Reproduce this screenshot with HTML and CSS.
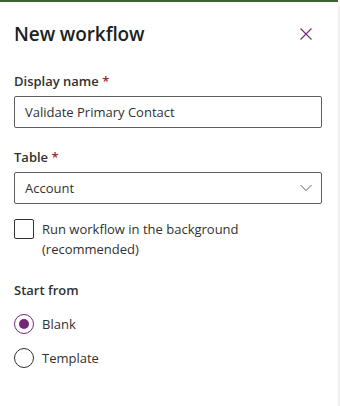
FILE: index.html
```html
<!DOCTYPE html>
<html>
<head>
<meta charset="utf-8">
<link rel="stylesheet" href="styles.css">
</head>
<body>
<div class="topbar"></div>
<div class="layout">
  <div class="panel">
    <div class="header">
      <h1 class="title">New workflow</h1>
      <button class="close" aria-label="Close">
        <svg width="12" height="12" viewBox="0 0 12 12"><path d="M0.5 0.5 L11.5 11.5 M11.5 0.5 L0.5 11.5" stroke="#742774" stroke-width="1.1" fill="none"/></svg>
      </button>
    </div>
    <div class="field">
      <label class="label">Display name <span class="req">*</span></label>
      <div class="input">Validate Primary Contact</div>
    </div>
    <div class="field">
      <label class="label">Table <span class="req">*</span></label>
      <div class="input select">
        <span>Account</span>
        <svg width="12" height="8" viewBox="0 0 12 8"><path d="M0.5 1 L6 6.5 L11.5 1" stroke="#605e5c" stroke-width="1" fill="none"/></svg>
      </div>
    </div>
    <div class="check">
      <span class="box"></span>
      <span class="check-text">Run workflow in the background (recommended)</span>
    </div>
    <div class="group">
      <div class="label">Start from</div>
      <div class="radio"><span class="circle on"></span><span>Blank</span></div>
      <div class="radio"><span class="circle"></span><span>Template</span></div>
    </div>
  </div>
  <div class="rail"></div>
</div>
</body>
</html>
```
FILE: styles.css
```css
html, body {
  margin: 0;
  padding: 0;
  background: #fff;
  font-family: "Open Sans", "Noto Sans", sans-serif;
  color: #323130;
}
.topbar {
  height: 2px;
  width: 338px;
  background: #3b6431;
}
.layout {
  display: flex;
  height: 404px;
}
.panel {
  width: 308px;
  padding: 0 16px 0 14px;
}
.rail {
  width: 2px;
  margin-top: 4px;
  background: #efefef;
}
.header {
  display: flex;
  align-items: center;
  justify-content: space-between;
  height: 64px;
}
.title {
  margin: 0;
  font-size: 19px;
  font-weight: 600;
  letter-spacing: -0.1px;
  color: #201f1e;
}
.close {
  border: 0;
  background: none;
  padding: 0;
  margin-right: 10px;
  width: 12px;
  height: 12px;
  display: flex;
}
.field {
  margin-bottom: 14px;
}
.label {
  display: block;
  font-size: 13px;
  font-weight: 600;
  line-height: 20px;
  padding: 5px 0 5px;
  color: #323130;
}
.req {
  color: #a4262c;
}
.input {
  height: 32px;
  box-sizing: border-box;
  border: 1px solid #605e5c;
  border-radius: 2px;
  padding: 0 10px;
  font-size: 13px;
  display: flex;
  align-items: center;
  color: #323130;
}
.select {
  justify-content: space-between;
  padding-right: 9px;
}
.check {
  display: flex;
  align-items: flex-start;
  gap: 8px;
  margin-top: 15px;
}
.field + .field {
  margin-bottom: 0;
}
.box {
  flex: none;
  width: 20px;
  height: 20px;
  box-sizing: border-box;
  border: 1px solid #323130;
  border-radius: 2px;
}
.check-text {
  font-size: 13px;
  line-height: 20px;
  color: #323130;
}
.group {
  margin-top: 16px;
}
.group .label {
  padding-bottom: 14px;
}
.radio {
  display: flex;
  align-items: center;
  gap: 8px;
  font-size: 13px;
  height: 20px;
  margin-bottom: 14px;
  color: #323130;
}
.circle {
  width: 20px;
  height: 20px;
  box-sizing: border-box;
  border: 1px solid #323130;
  border-radius: 50%;
  position: relative;
}
.circle.on {
  border-color: #742774;
}
.circle.on::after {
  content: "";
  position: absolute;
  left: 4px;
  top: 4px;
  width: 10px;
  height: 10px;
  border-radius: 50%;
  background: #742774;
}
```
